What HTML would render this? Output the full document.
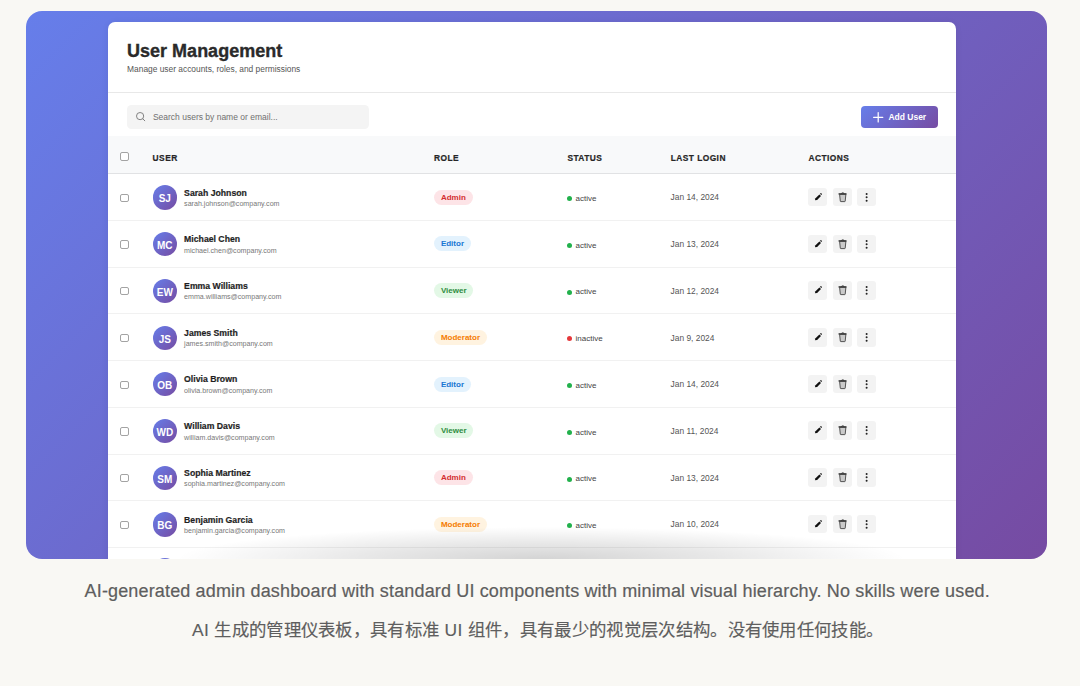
<!DOCTYPE html>
<html><head><meta charset="utf-8">
<style>
*{box-sizing:border-box;margin:0;padding:0}
html,body{width:1080px;height:686px;overflow:hidden;background:#f9f8f4;font-family:"Liberation Sans",sans-serif}
.abs{position:absolute;white-space:nowrap}
.outer{position:absolute;left:26px;top:11.4px;width:1021px;height:547.6px;border-radius:16px;overflow:hidden;background:linear-gradient(135deg,#667eea 0%,#764ba2 100%)}
.card{position:absolute;left:82.1px;top:10.5px;width:848px;height:600px;background:#fff;border-radius:7px;box-shadow:0 1px 6px rgba(40,40,90,.10)}
.title{left:19px;top:18.5px;font-size:18px;font-weight:bold;color:#2a2a2a;line-height:22px;-webkit-text-stroke:0.35px #2a2a2a}
.sub{left:19px;top:42px;font-size:8.4px;color:#555;line-height:10px}
.sep{left:0;top:70px;width:848px;height:1px;background:#e8e8e8}
.search{left:18.8px;top:82.8px;width:242.5px;height:24px;background:#f4f4f4;border-radius:4.5px}
.search .ph{left:26px;top:7.2px;font-size:8.5px;color:#707070;line-height:10px}
.search svg{position:absolute;left:0;top:0}
.btn{left:753.3px;top:84px;width:76.2px;height:22px;border-radius:4px;background:linear-gradient(135deg,#667eea 0%,#764ba2 100%)}
.btn .t{left:27px;top:6.4px;font-size:8.5px;font-weight:bold;color:#fff;line-height:10px}
.btn svg{position:absolute;left:0;top:0}
.thead{left:0;top:114px;width:848px;height:38px;background:#f8f9fa;border-bottom:1px solid #e1e2e4}
.th{font-size:8.4px;font-weight:bold;color:#262626;letter-spacing:.45px;line-height:10px;top:17px;-webkit-text-stroke:0.2px #262626}
.cb{width:8.3px;height:8.3px;border:1px solid #a3a3a3;border-radius:2px;background:#fff}
.row{left:0;width:848px;border-bottom:1px solid #f1f1f1}
.av{left:44.6px;top:11.2px;width:24.2px;height:24.2px;border-radius:50%;background:linear-gradient(135deg,#667eea 0%,#764ba2 100%);color:#fff;font-size:10px;font-weight:bold;text-align:center;line-height:28px}
.nm{left:76px;top:13.4px;font-size:8.7px;font-weight:bold;color:#1f1f1f;line-height:10px;-webkit-text-stroke:0.2px #1f1f1f}
.em{left:76px;top:25.8px;font-size:7.1px;color:#777;line-height:8px}
.badge{left:326px;top:15.5px;height:15px;border-radius:8px;font-size:8px;font-weight:bold;line-height:15px;padding:0 6.8px}
.b-admin{background:#fde4e7;color:#d32f2f}
.b-editor{background:#e3f2fd;color:#1976d2}
.b-viewer{background:#e3f8e6;color:#2e8b3e}
.b-mod{background:#fff3e0;color:#f57c00}
.st{left:467.5px;top:19.8px;font-size:8px;color:#444;line-height:10px}
.dot{left:459.3px;top:22px;width:5px;height:5px;border-radius:50%}
.dt{left:562.5px;top:18.2px;font-size:8.4px;color:#555;line-height:10px}
.act{top:13.6px;width:19px;height:18.6px;border-radius:3px;background:#f3f3f3}
.act svg{position:absolute;left:0;top:0}
.cap1{-webkit-text-stroke:0.2px #5e5e5e;left:84.6px;top:581px;font-size:18px;letter-spacing:0.15px;color:#5e5e5e;line-height:20px}
.cap2{-webkit-text-stroke:0.15px #5e5e5e;left:192px;top:620.3px;font-size:17.4px;letter-spacing:0.32px;color:#5e5e5e;line-height:20px}
.fade{left:150px;top:516px;width:730px;height:32px;background:radial-gradient(ellipse 50% 100% at 50% 100%,rgba(0,0,0,.17) 0%,rgba(0,0,0,.09) 50%,rgba(0,0,0,0) 100%)}
</style></head><body>
<div class="outer">
 <div class="card">
  <div class="abs title">User Management</div>
  <div class="abs sub">Manage user accounts, roles, and permissions</div>
  <div class="abs sep"></div>
  <div class="abs search"><svg width="40" height="24" viewBox="0 0 40 24"><circle cx="13.1" cy="11.1" r="3.6" fill="none" stroke="#7a7a7a" stroke-width="0.95"/><path d="M15.8 13.8 L17.8 15.8" stroke="#7a7a7a" stroke-width="0.95" stroke-linecap="round"/></svg><div class="abs ph">Search users by name or email...</div></div>
  <div class="abs btn"><svg width="30" height="22" viewBox="0 0 30 22"><path d="M17.2 6.6 V15.9 M12.6 11.25 H21.8" stroke="#fff" stroke-width="1.25" stroke-linecap="round"/></svg><div class="abs t">Add User</div></div>
  <div class="abs thead">
   <div class="abs cb" style="left:12.3px;top:16.5px"></div>
   <div class="abs th" style="left:44.5px">USER</div>
   <div class="abs th" style="left:326px">ROLE</div>
   <div class="abs th" style="left:459.3px">STATUS</div>
   <div class="abs th" style="left:562.6px">LAST LOGIN</div>
   <div class="abs th" style="left:700.3px">ACTIONS</div>
  </div>
  <div class="abs row" style="top:152.30px;height:46.72px">
   <div class="abs cb" style="left:12.3px;top:19.5px"></div>
   <div class="abs av">SJ</div>
   <div class="abs nm">Sarah Johnson</div>
   <div class="abs em">sarah.johnson@company.com</div>
   <div class="abs badge b-admin">Admin</div>
   <div class="abs dot" style="background:#22b14c"></div>
   <div class="abs st">active</div>
   <div class="abs dt">Jan 14, 2024</div>
   <div class="abs act" style="left:700.3px"><svg width="19" height="18.5" viewBox="0 0 19 18.5"><path d="M6.9 12.3 L7.5 10.3 L11.4 6.4 L13.0 8.0 L9.1 11.9 Z" fill="#111"/><path d="M12.0 5.8 L12.6 5.2 Q12.9 4.9 13.2 5.2 L13.8 5.8 Q14.1 6.1 13.8 6.4 L13.2 7.0 Z" fill="#111"/></svg></div>
   <div class="abs act" style="left:724.5px"><svg width="19" height="18.5" viewBox="0 0 19 18.5"><path d="M6.6 6.3 L12.9 6.3 L12.2 13.2 Q12.1 13.6 11.7 13.6 L7.8 13.6 Q7.4 13.6 7.3 13.2 Z" fill="#c9c9c9" stroke="#3a3a3a" stroke-width="0.85"/><path d="M6.0 5.9 L13.1 5.9" stroke="#2a2a2a" stroke-width="1.2" stroke-linecap="round"/><path d="M8.6 5.6 L8.9 4.9 L10.6 4.9 L10.9 5.6" fill="none" stroke="#2a2a2a" stroke-width="0.8"/></svg></div>
   <div class="abs act" style="left:748.6px"><svg width="19" height="18.5" viewBox="0 0 19 18.5"><g fill="#222"><circle cx="9.6" cy="5.9" r="1.0"/><circle cx="9.6" cy="9.35" r="1.0"/><circle cx="9.6" cy="12.8" r="1.0"/></g></svg></div>
  </div>
  <div class="abs row" style="top:199.02px;height:46.72px">
   <div class="abs cb" style="left:12.3px;top:19.5px"></div>
   <div class="abs av">MC</div>
   <div class="abs nm">Michael Chen</div>
   <div class="abs em">michael.chen@company.com</div>
   <div class="abs badge b-editor">Editor</div>
   <div class="abs dot" style="background:#22b14c"></div>
   <div class="abs st">active</div>
   <div class="abs dt">Jan 13, 2024</div>
   <div class="abs act" style="left:700.3px"><svg width="19" height="18.5" viewBox="0 0 19 18.5"><path d="M6.9 12.3 L7.5 10.3 L11.4 6.4 L13.0 8.0 L9.1 11.9 Z" fill="#111"/><path d="M12.0 5.8 L12.6 5.2 Q12.9 4.9 13.2 5.2 L13.8 5.8 Q14.1 6.1 13.8 6.4 L13.2 7.0 Z" fill="#111"/></svg></div>
   <div class="abs act" style="left:724.5px"><svg width="19" height="18.5" viewBox="0 0 19 18.5"><path d="M6.6 6.3 L12.9 6.3 L12.2 13.2 Q12.1 13.6 11.7 13.6 L7.8 13.6 Q7.4 13.6 7.3 13.2 Z" fill="#c9c9c9" stroke="#3a3a3a" stroke-width="0.85"/><path d="M6.0 5.9 L13.1 5.9" stroke="#2a2a2a" stroke-width="1.2" stroke-linecap="round"/><path d="M8.6 5.6 L8.9 4.9 L10.6 4.9 L10.9 5.6" fill="none" stroke="#2a2a2a" stroke-width="0.8"/></svg></div>
   <div class="abs act" style="left:748.6px"><svg width="19" height="18.5" viewBox="0 0 19 18.5"><g fill="#222"><circle cx="9.6" cy="5.9" r="1.0"/><circle cx="9.6" cy="9.35" r="1.0"/><circle cx="9.6" cy="12.8" r="1.0"/></g></svg></div>
  </div>
  <div class="abs row" style="top:245.74px;height:46.72px">
   <div class="abs cb" style="left:12.3px;top:19.5px"></div>
   <div class="abs av">EW</div>
   <div class="abs nm">Emma Williams</div>
   <div class="abs em">emma.williams@company.com</div>
   <div class="abs badge b-viewer">Viewer</div>
   <div class="abs dot" style="background:#22b14c"></div>
   <div class="abs st">active</div>
   <div class="abs dt">Jan 12, 2024</div>
   <div class="abs act" style="left:700.3px"><svg width="19" height="18.5" viewBox="0 0 19 18.5"><path d="M6.9 12.3 L7.5 10.3 L11.4 6.4 L13.0 8.0 L9.1 11.9 Z" fill="#111"/><path d="M12.0 5.8 L12.6 5.2 Q12.9 4.9 13.2 5.2 L13.8 5.8 Q14.1 6.1 13.8 6.4 L13.2 7.0 Z" fill="#111"/></svg></div>
   <div class="abs act" style="left:724.5px"><svg width="19" height="18.5" viewBox="0 0 19 18.5"><path d="M6.6 6.3 L12.9 6.3 L12.2 13.2 Q12.1 13.6 11.7 13.6 L7.8 13.6 Q7.4 13.6 7.3 13.2 Z" fill="#c9c9c9" stroke="#3a3a3a" stroke-width="0.85"/><path d="M6.0 5.9 L13.1 5.9" stroke="#2a2a2a" stroke-width="1.2" stroke-linecap="round"/><path d="M8.6 5.6 L8.9 4.9 L10.6 4.9 L10.9 5.6" fill="none" stroke="#2a2a2a" stroke-width="0.8"/></svg></div>
   <div class="abs act" style="left:748.6px"><svg width="19" height="18.5" viewBox="0 0 19 18.5"><g fill="#222"><circle cx="9.6" cy="5.9" r="1.0"/><circle cx="9.6" cy="9.35" r="1.0"/><circle cx="9.6" cy="12.8" r="1.0"/></g></svg></div>
  </div>
  <div class="abs row" style="top:292.46px;height:46.72px">
   <div class="abs cb" style="left:12.3px;top:19.5px"></div>
   <div class="abs av">JS</div>
   <div class="abs nm">James Smith</div>
   <div class="abs em">james.smith@company.com</div>
   <div class="abs badge b-mod">Moderator</div>
   <div class="abs dot" style="background:#e5383b"></div>
   <div class="abs st">inactive</div>
   <div class="abs dt">Jan 9, 2024</div>
   <div class="abs act" style="left:700.3px"><svg width="19" height="18.5" viewBox="0 0 19 18.5"><path d="M6.9 12.3 L7.5 10.3 L11.4 6.4 L13.0 8.0 L9.1 11.9 Z" fill="#111"/><path d="M12.0 5.8 L12.6 5.2 Q12.9 4.9 13.2 5.2 L13.8 5.8 Q14.1 6.1 13.8 6.4 L13.2 7.0 Z" fill="#111"/></svg></div>
   <div class="abs act" style="left:724.5px"><svg width="19" height="18.5" viewBox="0 0 19 18.5"><path d="M6.6 6.3 L12.9 6.3 L12.2 13.2 Q12.1 13.6 11.7 13.6 L7.8 13.6 Q7.4 13.6 7.3 13.2 Z" fill="#c9c9c9" stroke="#3a3a3a" stroke-width="0.85"/><path d="M6.0 5.9 L13.1 5.9" stroke="#2a2a2a" stroke-width="1.2" stroke-linecap="round"/><path d="M8.6 5.6 L8.9 4.9 L10.6 4.9 L10.9 5.6" fill="none" stroke="#2a2a2a" stroke-width="0.8"/></svg></div>
   <div class="abs act" style="left:748.6px"><svg width="19" height="18.5" viewBox="0 0 19 18.5"><g fill="#222"><circle cx="9.6" cy="5.9" r="1.0"/><circle cx="9.6" cy="9.35" r="1.0"/><circle cx="9.6" cy="12.8" r="1.0"/></g></svg></div>
  </div>
  <div class="abs row" style="top:339.18px;height:46.72px">
   <div class="abs cb" style="left:12.3px;top:19.5px"></div>
   <div class="abs av">OB</div>
   <div class="abs nm">Olivia Brown</div>
   <div class="abs em">olivia.brown@company.com</div>
   <div class="abs badge b-editor">Editor</div>
   <div class="abs dot" style="background:#22b14c"></div>
   <div class="abs st">active</div>
   <div class="abs dt">Jan 14, 2024</div>
   <div class="abs act" style="left:700.3px"><svg width="19" height="18.5" viewBox="0 0 19 18.5"><path d="M6.9 12.3 L7.5 10.3 L11.4 6.4 L13.0 8.0 L9.1 11.9 Z" fill="#111"/><path d="M12.0 5.8 L12.6 5.2 Q12.9 4.9 13.2 5.2 L13.8 5.8 Q14.1 6.1 13.8 6.4 L13.2 7.0 Z" fill="#111"/></svg></div>
   <div class="abs act" style="left:724.5px"><svg width="19" height="18.5" viewBox="0 0 19 18.5"><path d="M6.6 6.3 L12.9 6.3 L12.2 13.2 Q12.1 13.6 11.7 13.6 L7.8 13.6 Q7.4 13.6 7.3 13.2 Z" fill="#c9c9c9" stroke="#3a3a3a" stroke-width="0.85"/><path d="M6.0 5.9 L13.1 5.9" stroke="#2a2a2a" stroke-width="1.2" stroke-linecap="round"/><path d="M8.6 5.6 L8.9 4.9 L10.6 4.9 L10.9 5.6" fill="none" stroke="#2a2a2a" stroke-width="0.8"/></svg></div>
   <div class="abs act" style="left:748.6px"><svg width="19" height="18.5" viewBox="0 0 19 18.5"><g fill="#222"><circle cx="9.6" cy="5.9" r="1.0"/><circle cx="9.6" cy="9.35" r="1.0"/><circle cx="9.6" cy="12.8" r="1.0"/></g></svg></div>
  </div>
  <div class="abs row" style="top:385.90px;height:46.72px">
   <div class="abs cb" style="left:12.3px;top:19.5px"></div>
   <div class="abs av">WD</div>
   <div class="abs nm">William Davis</div>
   <div class="abs em">william.davis@company.com</div>
   <div class="abs badge b-viewer">Viewer</div>
   <div class="abs dot" style="background:#22b14c"></div>
   <div class="abs st">active</div>
   <div class="abs dt">Jan 11, 2024</div>
   <div class="abs act" style="left:700.3px"><svg width="19" height="18.5" viewBox="0 0 19 18.5"><path d="M6.9 12.3 L7.5 10.3 L11.4 6.4 L13.0 8.0 L9.1 11.9 Z" fill="#111"/><path d="M12.0 5.8 L12.6 5.2 Q12.9 4.9 13.2 5.2 L13.8 5.8 Q14.1 6.1 13.8 6.4 L13.2 7.0 Z" fill="#111"/></svg></div>
   <div class="abs act" style="left:724.5px"><svg width="19" height="18.5" viewBox="0 0 19 18.5"><path d="M6.6 6.3 L12.9 6.3 L12.2 13.2 Q12.1 13.6 11.7 13.6 L7.8 13.6 Q7.4 13.6 7.3 13.2 Z" fill="#c9c9c9" stroke="#3a3a3a" stroke-width="0.85"/><path d="M6.0 5.9 L13.1 5.9" stroke="#2a2a2a" stroke-width="1.2" stroke-linecap="round"/><path d="M8.6 5.6 L8.9 4.9 L10.6 4.9 L10.9 5.6" fill="none" stroke="#2a2a2a" stroke-width="0.8"/></svg></div>
   <div class="abs act" style="left:748.6px"><svg width="19" height="18.5" viewBox="0 0 19 18.5"><g fill="#222"><circle cx="9.6" cy="5.9" r="1.0"/><circle cx="9.6" cy="9.35" r="1.0"/><circle cx="9.6" cy="12.8" r="1.0"/></g></svg></div>
  </div>
  <div class="abs row" style="top:432.62px;height:46.72px">
   <div class="abs cb" style="left:12.3px;top:19.5px"></div>
   <div class="abs av">SM</div>
   <div class="abs nm">Sophia Martinez</div>
   <div class="abs em">sophia.martinez@company.com</div>
   <div class="abs badge b-admin">Admin</div>
   <div class="abs dot" style="background:#22b14c"></div>
   <div class="abs st">active</div>
   <div class="abs dt">Jan 13, 2024</div>
   <div class="abs act" style="left:700.3px"><svg width="19" height="18.5" viewBox="0 0 19 18.5"><path d="M6.9 12.3 L7.5 10.3 L11.4 6.4 L13.0 8.0 L9.1 11.9 Z" fill="#111"/><path d="M12.0 5.8 L12.6 5.2 Q12.9 4.9 13.2 5.2 L13.8 5.8 Q14.1 6.1 13.8 6.4 L13.2 7.0 Z" fill="#111"/></svg></div>
   <div class="abs act" style="left:724.5px"><svg width="19" height="18.5" viewBox="0 0 19 18.5"><path d="M6.6 6.3 L12.9 6.3 L12.2 13.2 Q12.1 13.6 11.7 13.6 L7.8 13.6 Q7.4 13.6 7.3 13.2 Z" fill="#c9c9c9" stroke="#3a3a3a" stroke-width="0.85"/><path d="M6.0 5.9 L13.1 5.9" stroke="#2a2a2a" stroke-width="1.2" stroke-linecap="round"/><path d="M8.6 5.6 L8.9 4.9 L10.6 4.9 L10.9 5.6" fill="none" stroke="#2a2a2a" stroke-width="0.8"/></svg></div>
   <div class="abs act" style="left:748.6px"><svg width="19" height="18.5" viewBox="0 0 19 18.5"><g fill="#222"><circle cx="9.6" cy="5.9" r="1.0"/><circle cx="9.6" cy="9.35" r="1.0"/><circle cx="9.6" cy="12.8" r="1.0"/></g></svg></div>
  </div>
  <div class="abs row" style="top:479.34px;height:46.72px">
   <div class="abs cb" style="left:12.3px;top:19.5px"></div>
   <div class="abs av">BG</div>
   <div class="abs nm">Benjamin Garcia</div>
   <div class="abs em">benjamin.garcia@company.com</div>
   <div class="abs badge b-mod">Moderator</div>
   <div class="abs dot" style="background:#22b14c"></div>
   <div class="abs st">active</div>
   <div class="abs dt">Jan 10, 2024</div>
   <div class="abs act" style="left:700.3px"><svg width="19" height="18.5" viewBox="0 0 19 18.5"><path d="M6.9 12.3 L7.5 10.3 L11.4 6.4 L13.0 8.0 L9.1 11.9 Z" fill="#111"/><path d="M12.0 5.8 L12.6 5.2 Q12.9 4.9 13.2 5.2 L13.8 5.8 Q14.1 6.1 13.8 6.4 L13.2 7.0 Z" fill="#111"/></svg></div>
   <div class="abs act" style="left:724.5px"><svg width="19" height="18.5" viewBox="0 0 19 18.5"><path d="M6.6 6.3 L12.9 6.3 L12.2 13.2 Q12.1 13.6 11.7 13.6 L7.8 13.6 Q7.4 13.6 7.3 13.2 Z" fill="#c9c9c9" stroke="#3a3a3a" stroke-width="0.85"/><path d="M6.0 5.9 L13.1 5.9" stroke="#2a2a2a" stroke-width="1.2" stroke-linecap="round"/><path d="M8.6 5.6 L8.9 4.9 L10.6 4.9 L10.9 5.6" fill="none" stroke="#2a2a2a" stroke-width="0.8"/></svg></div>
   <div class="abs act" style="left:748.6px"><svg width="19" height="18.5" viewBox="0 0 19 18.5"><g fill="#222"><circle cx="9.6" cy="5.9" r="1.0"/><circle cx="9.6" cy="9.35" r="1.0"/><circle cx="9.6" cy="12.8" r="1.0"/></g></svg></div>
  </div>
  <div class="abs row" style="top:526.06px;height:46.72px">
   <div class="abs cb" style="left:12.3px;top:19.5px"></div>
   <div class="abs av" style="top:10.4px">AR</div>
   <div class="abs nm">Ava Rodriguez</div>
   <div class="abs em">ava.rodriguez@company.com</div>
   <div class="abs badge b-viewer">Viewer</div>
   <div class="abs dot" style="background:#22b14c"></div>
   <div class="abs st">active</div>
   <div class="abs dt">Jan 8, 2024</div>
   <div class="abs act" style="left:700.3px"><svg width="19" height="18.5" viewBox="0 0 19 18.5"><path d="M6.9 12.3 L7.5 10.3 L11.4 6.4 L13.0 8.0 L9.1 11.9 Z" fill="#111"/><path d="M12.0 5.8 L12.6 5.2 Q12.9 4.9 13.2 5.2 L13.8 5.8 Q14.1 6.1 13.8 6.4 L13.2 7.0 Z" fill="#111"/></svg></div>
   <div class="abs act" style="left:724.5px"><svg width="19" height="18.5" viewBox="0 0 19 18.5"><path d="M6.6 6.3 L12.9 6.3 L12.2 13.2 Q12.1 13.6 11.7 13.6 L7.8 13.6 Q7.4 13.6 7.3 13.2 Z" fill="#c9c9c9" stroke="#3a3a3a" stroke-width="0.85"/><path d="M6.0 5.9 L13.1 5.9" stroke="#2a2a2a" stroke-width="1.2" stroke-linecap="round"/><path d="M8.6 5.6 L8.9 4.9 L10.6 4.9 L10.9 5.6" fill="none" stroke="#2a2a2a" stroke-width="0.8"/></svg></div>
   <div class="abs act" style="left:748.6px"><svg width="19" height="18.5" viewBox="0 0 19 18.5"><g fill="#222"><circle cx="9.6" cy="5.9" r="1.0"/><circle cx="9.6" cy="9.35" r="1.0"/><circle cx="9.6" cy="12.8" r="1.0"/></g></svg></div>
  </div>
 </div>
 <div class="abs fade"></div>
</div>
<div class="abs cap1">AI-generated admin dashboard with standard UI components with minimal visual hierarchy. No skills were used.</div>
<div class="abs cap2" lang="zh-CN">AI 生成的管理仪表板，具有标准 UI 组件，具有最少的视觉层次结构。没有使用任何技能。</div>
</body></html>
